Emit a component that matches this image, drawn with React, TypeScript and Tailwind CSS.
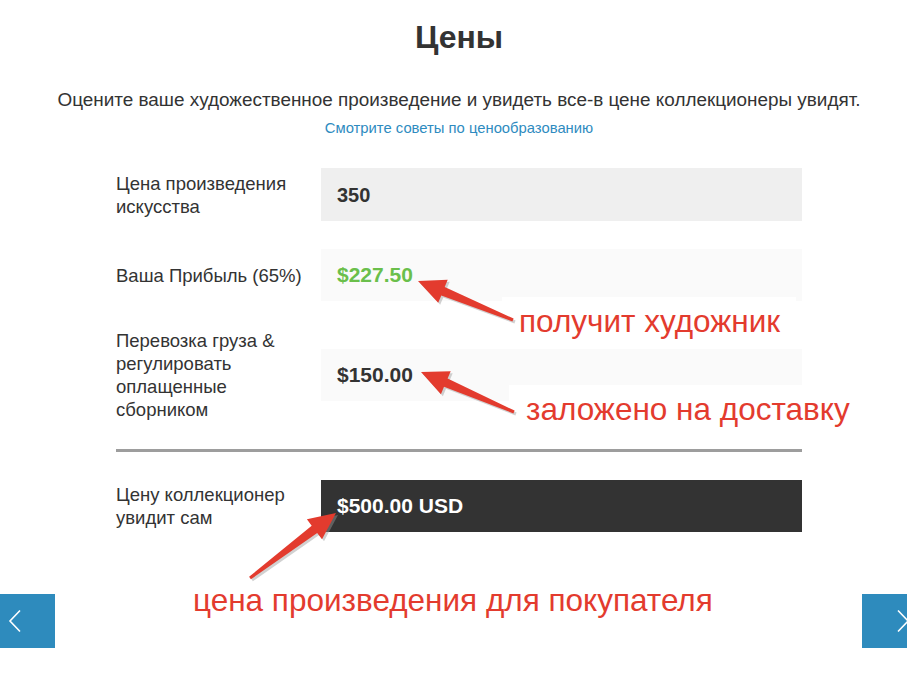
import React from "react";

type Pt = [number, number];

function arrowPoly(tail: Pt, tip: Pt, headLen = 27, headHalf = 12.5, shaftTail = 1.5, shaftHead = 4.5) {
  const dx = tip[0] - tail[0];
  const dy = tip[1] - tail[1];
  const len = Math.hypot(dx, dy);
  const ux = dx / len;
  const uy = dy / len;
  const nx = -uy;
  const ny = ux;
  const bx = tip[0] - ux * headLen;
  const by = tip[1] - uy * headLen;
  const pts: Pt[] = [
    [tail[0] + nx * shaftTail, tail[1] + ny * shaftTail],
    [bx + nx * shaftHead, by + ny * shaftHead],
    [bx + nx * headHalf, by + ny * headHalf],
    [tip[0], tip[1]],
    [bx - nx * headHalf, by - ny * headHalf],
    [bx - nx * shaftHead, by - ny * shaftHead],
    [tail[0] - nx * shaftTail, tail[1] - ny * shaftTail],
  ];
  return pts.map((p) => `${p[0].toFixed(1)},${p[1].toFixed(1)}`).join(" ");
}

function Arrow({ tail, tip }: { tail: Pt; tip: Pt }) {
  const p = arrowPoly(tail, tip);
  return (
    <g>
      <polygon points={p} fill="#9a9a9a" opacity="0.45" transform="translate(2,2)" />
      <polygon points={p} fill="#e33b2e" />
    </g>
  );
}

function Row({ label, children }: { label: React.ReactNode; children: React.ReactNode }) {
  return (
    <div className="flex items-center">
      <div className="w-[205px] shrink-0 text-[18.5px] leading-[23px] text-[#333]">{label}</div>
      <div className="flex-1">{children}</div>
    </div>
  );
}

export default function App() {
  return (
    <div
      className="relative w-[907px] h-[696px] overflow-hidden bg-white"
      style={{ fontFamily: '"Liberation Sans", Arial, sans-serif' }}
    >
      <div className="w-[918px] text-center">
        <h1 className="pt-[19px] text-[32px] leading-[36px] font-bold text-[#333]">Цены</h1>
        <p className="mt-[33px] text-[18.9px] leading-[24px] text-[#333]">
          Оцените ваше художественное произведение и увидеть все-в цене коллекционеры увидят.
        </p>
        <p className="mt-[6px] text-[14.8px] leading-[20px] text-[#2e8bc0]">Смотрите советы по ценообразованию</p>
      </div>

      <div className="ml-[116px] mt-[30px] w-[686px] flex flex-col gap-[28px]">
        <Row label={<>Цена произведения<br />искусства</>}>
          <div className="h-[53px] bg-[#efefef] pl-[16px] flex items-center text-[20px] font-bold text-[#333]">350</div>
        </Row>
        <Row label="Ваша Прибыль (65%)">
          <div className="h-[52px] bg-[#fafafa] pl-[16px] flex items-center text-[21px] font-bold text-[#6abf4b]">$227.50</div>
        </Row>
        <Row label={<>Перевозка груза &amp;<br />регулировать<br />оплащенные<br />сборником</>}>
          <div className="h-[52px] bg-[#fafafa] pl-[16px] flex items-center text-[21px] font-bold text-[#333]">$150.00</div>
        </Row>
        <div className="h-[3px] bg-[#9d9d9d]" />
        <Row label={<>Цену коллекционер<br />увидит сам</>}>
          <div className="h-[52px] bg-[#333333] pl-[16px] flex items-center text-[21px] font-bold text-white">$500.00 USD</div>
        </Row>
      </div>

      {/* annotation boxes */}
      <div className="absolute left-[502px] top-[297px] w-[294px] h-[50px] bg-white flex items-center pl-[17px] text-[31.5px] text-[#e33b2e]">
        получит художник
      </div>
      <div className="absolute left-[509px] top-[385px] w-[356px] h-[50px] bg-white flex items-center pl-[17px] text-[31.5px] text-[#e33b2e]">
        заложено на доставку
      </div>
      <div className="absolute left-[176px] top-[577px] w-[560px] h-[48px] bg-white flex items-center pl-[17px] text-[31.5px] text-[#e33b2e]">
        цена произведения для покупателя
      </div>

      <svg className="absolute left-0 top-0 pointer-events-none" width="907" height="696">
        <Arrow tail={[513, 320]} tip={[418, 281]} />
        <Arrow tail={[514, 412]} tip={[421, 372]} />
        <Arrow tail={[250, 578]} tip={[336, 513]} />
      </svg>

      {/* slider navigation */}
      <button className="absolute left-0 top-[594px] w-[55px] h-[54px] bg-[#2e8bbd] flex items-center pl-[8px]">
        <svg width="14" height="24" viewBox="0 0 14 24">
          <polyline points="12,1.5 2,12 12,22.5" fill="none" stroke="white" strokeWidth="1.6" />
        </svg>
      </button>
      <button className="absolute left-[862px] top-[594px] w-[55px] h-[54px] bg-[#2e8bbd] flex items-center pl-[34px]">
        <svg width="14" height="24" viewBox="0 0 14 24">
          <polyline points="2,1.5 12,12 2,22.5" fill="none" stroke="white" strokeWidth="1.6" />
        </svg>
      </button>
    </div>
  );
}
